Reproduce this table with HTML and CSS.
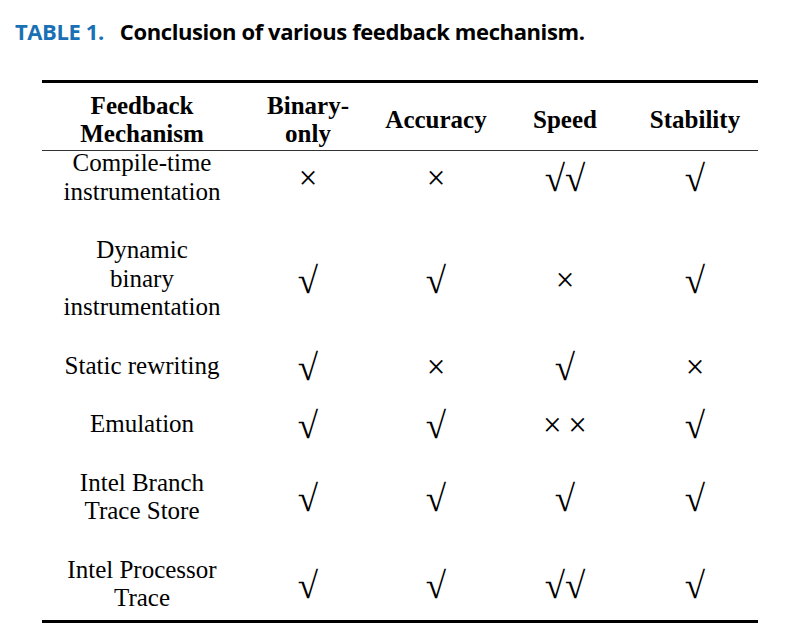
FILE: index.html
```html
<!DOCTYPE html>
<html>
<head>
<meta charset="utf-8">
<link rel="stylesheet" href="styles.css">
</head>
<body>
<div class="page">
  <h1 class="caption"><span class="label">TABLE 1.</span><span class="title">Conclusion of various feedback mechanism.</span></h1>
  <div class="table">
    <div class="row head">
      <div class="cell">Feedback<br>Mechanism</div>
      <div class="cell">Binary-<br>only</div>
      <div class="cell">Accuracy</div>
      <div class="cell">Speed</div>
      <div class="cell">Stability</div>
    </div>
    <div class="body">
      <div class="row">
        <div class="cell">Compile-time<br>instrumentation</div>
        <div class="cell no">×</div>
        <div class="cell no">×</div>
        <div class="cell yes">√√</div>
        <div class="cell yes">√</div>
      </div>
      <div class="row">
        <div class="cell">Dynamic<br>binary<br>instrumentation</div>
        <div class="cell yes">√</div>
        <div class="cell yes">√</div>
        <div class="cell no">×</div>
        <div class="cell yes">√</div>
      </div>
      <div class="row">
        <div class="cell">Static rewriting</div>
        <div class="cell yes">√</div>
        <div class="cell no">×</div>
        <div class="cell yes">√</div>
        <div class="cell no">×</div>
      </div>
      <div class="row">
        <div class="cell">Emulation</div>
        <div class="cell yes">√</div>
        <div class="cell yes">√</div>
        <div class="cell no">×&thinsp;×</div>
        <div class="cell yes">√</div>
      </div>
      <div class="row">
        <div class="cell">Intel Branch<br>Trace Store</div>
        <div class="cell yes">√</div>
        <div class="cell yes">√</div>
        <div class="cell yes">√</div>
        <div class="cell yes">√</div>
      </div>
      <div class="row">
        <div class="cell">Intel Processor<br>Trace</div>
        <div class="cell yes">√</div>
        <div class="cell yes">√</div>
        <div class="cell yes">√√</div>
        <div class="cell yes">√</div>
      </div>
    </div>
  </div>
</div>
</body>
</html>
```

FILE: styles.css
```css
html, body {
  margin: 0;
  padding: 0;
  background: #ffffff;
}

.page {
  width: 788px;
  height: 634px;
  padding: 18px 0 0 0;
  box-sizing: border-box;
}

.caption {
  margin: 0 0 0 15px;
  font-family: "Open Sans", "Liberation Sans", sans-serif;
  font-weight: 700;
  font-size: 22px;
  line-height: 26px;
  letter-spacing: -0.4px;
  color: #000;
}

.caption .label {
  color: #1a70b4;
  margin-right: 16px;
}

.table {
  margin: 36px 0 0 42px;
  width: 716px;
  border-top: 3px solid #000;
  border-bottom: 3px solid #000;
  font-family: "Liberation Serif", "Times New Roman", serif;
  font-size: 25px;
  line-height: 28.5px;
  color: #000;
}

.row {
  display: grid;
  grid-template-columns: 200px 132px 124px 134px 126px;
  align-items: center;
  text-align: center;
}

.row.head {
  font-weight: 700;
  line-height: 28px;
  padding: 9px 0 2px 0;
  border-bottom: 1px solid #333;
}

.body {
  display: flex;
  flex-direction: column;
  gap: 30px;
  margin-top: -2px;
  padding-bottom: 7px;
}

.yes,
.no {
  height: 28.5px;
  display: flex;
  align-items: center;
  justify-content: center;
  overflow: visible;
}

.yes {
  font-size: 37px;
  line-height: 28.5px;
  font-weight: 300;
  transform: translateY(2px);
}

.no {
  font-size: 33px;
  line-height: 28.5px;
  font-weight: 300;
  transform: translateY(1px);
}
```
